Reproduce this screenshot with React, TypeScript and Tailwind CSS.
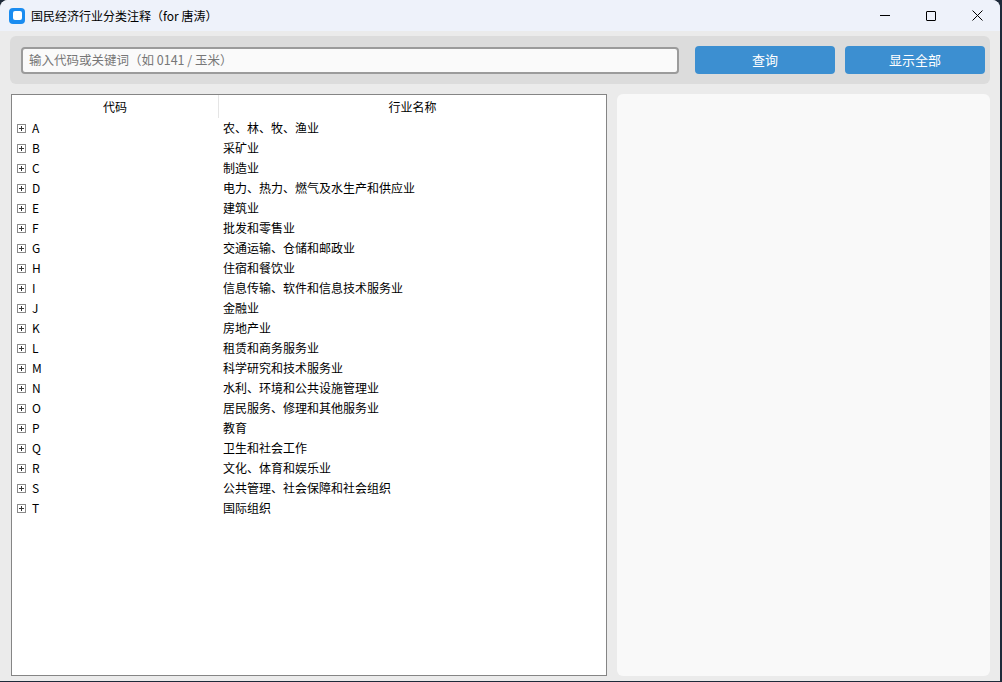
import React from "react";

const rows: [string, string][] = [
  ["A", "农、林、牧、渔业"],
  ["B", "采矿业"],
  ["C", "制造业"],
  ["D", "电力、热力、燃气及水生产和供应业"],
  ["E", "建筑业"],
  ["F", "批发和零售业"],
  ["G", "交通运输、仓储和邮政业"],
  ["H", "住宿和餐饮业"],
  ["I", "信息传输、软件和信息技术服务业"],
  ["J", "金融业"],
  ["K", "房地产业"],
  ["L", "租赁和商务服务业"],
  ["M", "科学研究和技术服务业"],
  ["N", "水利、环境和公共设施管理业"],
  ["O", "居民服务、修理和其他服务业"],
  ["P", "教育"],
  ["Q", "卫生和社会工作"],
  ["R", "文化、体育和娱乐业"],
  ["S", "公共管理、社会保障和社会组织"],
  ["T", "国际组织"],
];

function PlusBox() {
  return (
    <svg width="9" height="9" viewBox="0 0 9 9" className="shrink-0">
      <rect x="0.5" y="0.5" width="8" height="8" fill="white" stroke="#8a8a8a" />
      <path d="M2 4.5h5M4.5 2v5" stroke="#333" />
    </svg>
  );
}

export default function App() {
  const font = { fontFamily: '"Noto Sans CJK SC", "Noto Sans", sans-serif' };
  return (
    <div className="w-[1002px] h-[682px] bg-[#1e2a3a] text-[12px] text-black overflow-hidden" style={font}>
      <div className="w-[1000px] h-[681px] bg-[#ebebeb] rounded-t-[8px] flex flex-col overflow-hidden">
        {/* Title bar */}
        <div className="h-[31px] bg-[#eef2fa] flex items-center shrink-0">
          <div className="ml-[9px] w-[16px] h-[16px] rounded-[4px] bg-[#1a8cf0] flex items-center justify-center">
            <div className="w-[9px] h-[9px] rounded-[2px] bg-white" />
          </div>
          <span className="ml-[6px] text-[12px]">国民经济行业分类注释（for 唐涛）</span>
          <div className="ml-auto flex items-center h-full">
            <div className="w-[46px] flex justify-center">
              <div className="w-[10px] h-px bg-black" />
            </div>
            <div className="w-[46px] flex justify-center">
              <div className="w-[10px] h-[10px] border border-black rounded-[1px]" />
            </div>
            <div className="w-[46px] flex justify-center">
              <svg width="11" height="11" viewBox="0 0 11 11">
                <path d="M0.5 0.5l10 10M10.5 0.5l-10 10" stroke="#000" />
              </svg>
            </div>
          </div>
        </div>
        {/* Search bar */}
        <div className="mt-[5px] mx-[10px] h-[48px] bg-[#dcdcdc] rounded-[6px] flex items-center pl-[11px] pr-[5px] gap-[16px] shrink-0">
          <div className="flex-1 h-[27px] bg-[#fafafa] border-2 border-[#9b9b9b] rounded-[4px] flex items-center px-[6px] text-[#777] text-[12.5px]">
            输入代码或关键词（如 0141 / 玉米）
          </div>
          <div className="flex gap-[10px]">
            <button className="w-[140px] h-[28px] bg-[#3c8fd1] rounded-[4px] text-white text-[13px]">查询</button>
            <button className="w-[140px] h-[28px] bg-[#3c8fd1] rounded-[4px] text-white text-[13px]">显示全部</button>
          </div>
        </div>
        {/* Main */}
        <div className="flex-1 flex mt-[10px] mb-[5px] ml-[11px] mr-[10px] gap-[10px] min-h-0">
          <div className="w-[596px] bg-white border border-[#858585] flex flex-col">
            <div className="h-[23px] flex shrink-0">
              <div className="w-[207px] border-r border-[#e5e5e5] flex items-center justify-center">代码</div>
              <div className="flex-1 flex items-center justify-center">行业名称</div>
            </div>
            {rows.map(([c, n]) => (
              <div key={c} className="h-[20px] flex items-center">
                <div className="w-[211px] flex items-center pl-[5px] gap-[6px]">
                  <PlusBox />
                  <span>{c}</span>
                </div>
                <span>{n}</span>
              </div>
            ))}
          </div>
          <div className="flex-1 bg-[#f9f9f9] rounded-[6px]" />
        </div>
      </div>
    </div>
  );
}
